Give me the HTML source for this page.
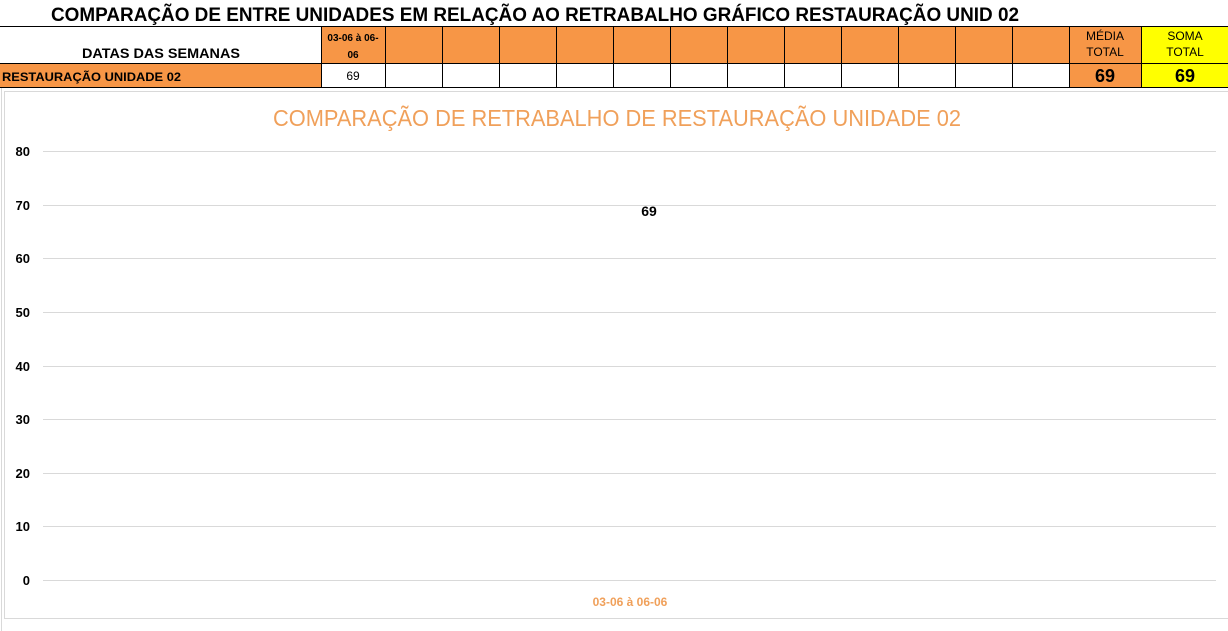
<!DOCTYPE html>
<html><head><meta charset="utf-8"><style>
body{margin:0;width:1228px;height:631px;background:#fff;overflow:hidden;position:relative;font-family:"Liberation Sans",Arial,sans-serif}
</style></head><body>
<svg width="1228" height="631" xmlns="http://www.w3.org/2000/svg" style="position:absolute;left:0;top:0">
<rect x="0" y="0" width="1228" height="631" fill="#fff"/>
<text x="51" y="21" font-family="Liberation Sans, sans-serif" font-weight="bold" font-size="19" textLength="968" lengthAdjust="spacingAndGlyphs" fill="#000">COMPARAÇÃO DE ENTRE UNIDADES EM RELAÇÃO AO RETRABALHO GRÁFICO RESTAURAÇÃO UNID 02</text>
<!-- header row -->
<rect x="321" y="26" width="748" height="37" fill="#F79646"/>
<rect x="1069" y="26" width="72" height="61" fill="#F79646"/>
<rect x="1141" y="26" width="87" height="61" fill="#FFFF00"/>
<rect x="0" y="63" width="321" height="24" fill="#F79646"/>
<g stroke="#000" stroke-width="1">
<line x1="0" y1="26.5" x2="1228" y2="26.5"/>
<line x1="0" y1="63.5" x2="1228" y2="63.5"/>
<line x1="0" y1="87.5" x2="1228" y2="87.5"/>
<line x1="321.5" y1="26" x2="321.5" y2="88"/>
<line x1="385.5" y1="26" x2="385.5" y2="88"/>
<line x1="442.5" y1="26" x2="442.5" y2="88"/>
<line x1="499.5" y1="26" x2="499.5" y2="88"/>
<line x1="556.5" y1="26" x2="556.5" y2="88"/>
<line x1="613.5" y1="26" x2="613.5" y2="88"/>
<line x1="670.5" y1="26" x2="670.5" y2="88"/>
<line x1="727.5" y1="26" x2="727.5" y2="88"/>
<line x1="784.5" y1="26" x2="784.5" y2="88"/>
<line x1="841.5" y1="26" x2="841.5" y2="88"/>
<line x1="898.5" y1="26" x2="898.5" y2="88"/>
<line x1="955.5" y1="26" x2="955.5" y2="88"/>
<line x1="1012.5" y1="26" x2="1012.5" y2="88"/>
<line x1="1069.5" y1="26" x2="1069.5" y2="88"/>
<line x1="1141.5" y1="26" x2="1141.5" y2="88"/>
</g>
<g font-family="Liberation Sans, sans-serif" font-weight="bold" fill="#000">
<text x="82" y="58" font-size="14" textLength="158" lengthAdjust="spacingAndGlyphs">DATAS DAS SEMANAS</text>
<text x="353" y="41" font-size="10" text-anchor="middle">03-06 à 06-</text>
<text x="353" y="58" font-size="10" text-anchor="middle">06</text>
<text x="2" y="81" font-size="12" textLength="179" lengthAdjust="spacingAndGlyphs">RESTAURAÇÃO UNIDADE 02</text>
<text x="1105" y="40" font-size="12" font-weight="normal" text-anchor="middle">MÉDIA</text>
<text x="1105" y="56" font-size="12" font-weight="normal" text-anchor="middle">TOTAL</text>
<text x="1185" y="40" font-size="12" font-weight="normal" text-anchor="middle">SOMA</text>
<text x="1185" y="56" font-size="12" font-weight="normal" text-anchor="middle">TOTAL</text>
<text x="1105" y="82" font-size="18" text-anchor="middle">69</text>
<text x="1185" y="82" font-size="18" text-anchor="middle">69</text>
</g>
<text x="353" y="80" font-family="Liberation Sans, sans-serif" font-size="12" text-anchor="middle">69</text>
<!-- chart -->
<rect x="4.5" y="91.5" width="1230" height="527" fill="#fff" stroke="#d9d9d9"/>
<line x1="1.5" y1="88" x2="1.5" y2="631" stroke="#d9d9d9"/>
<text x="617" y="126" font-family="Liberation Sans, sans-serif" font-size="23" fill="#F0A05A" text-anchor="middle" textLength="688" lengthAdjust="spacingAndGlyphs">COMPARAÇÃO DE RETRABALHO DE RESTAURAÇÃO UNIDADE 02</text>
<g stroke="#d9d9d9" stroke-width="1">
<line x1="43" y1="151.5" x2="1216" y2="151.5"/>
<line x1="43" y1="205.5" x2="1216" y2="205.5"/>
<line x1="43" y1="258.5" x2="1216" y2="258.5"/>
<line x1="43" y1="312.5" x2="1216" y2="312.5"/>
<line x1="43" y1="366.5" x2="1216" y2="366.5"/>
<line x1="43" y1="419.5" x2="1216" y2="419.5"/>
<line x1="43" y1="473.5" x2="1216" y2="473.5"/>
<line x1="43" y1="526.5" x2="1216" y2="526.5"/>
<line x1="43" y1="580.5" x2="1216" y2="580.5"/>
</g>
<g font-family="Liberation Sans, sans-serif" font-weight="bold" font-size="13" fill="#000" text-anchor="end">
<text x="30" y="156">80</text>
<text x="30" y="210">70</text>
<text x="30" y="263">60</text>
<text x="30" y="317">50</text>
<text x="30" y="371">40</text>
<text x="30" y="424">30</text>
<text x="30" y="478">20</text>
<text x="30" y="531">10</text>
<text x="30" y="585">0</text>
</g>
<text x="649" y="216" font-family="Liberation Sans, sans-serif" font-weight="bold" font-size="14" text-anchor="middle">69</text>
<text x="630" y="606" font-family="Liberation Sans, sans-serif" font-weight="bold" font-size="12" fill="#F0A05A" text-anchor="middle">03-06 à 06-06</text>
</svg>
</body></html>
